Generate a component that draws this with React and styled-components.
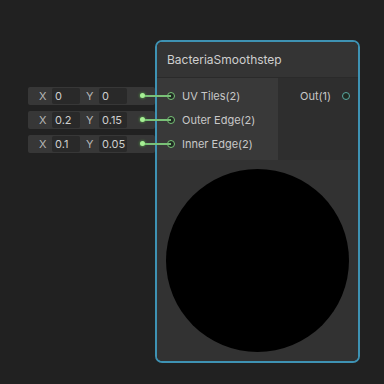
import React from 'react';
import styled, { createGlobalStyle } from 'styled-components';

const GlobalStyle = createGlobalStyle`
    html, body {
        margin: 0;
        padding: 0;
        background: #212121;
    }
    * {
        box-sizing: border-box;
    }
`

const Canvas = styled.div`
    display: flex;
    align-items: flex-start;
    width: 384px;
    height: 384px;
    padding: 40px 0 0 28px;
    font-family: Inter, "Noto Sans", sans-serif;
    font-size: 11px;
    color: #c4c4c4;
    overflow: hidden;
`

const InputColumn = styled.div`
    display: flex;
    flex-direction: column;
    gap: 6px;
    width: 127px;
    margin-top: 47px;
`

const InputRow = styled.div`
    position: relative;
    display: flex;
    align-items: center;
    height: 18px;
    padding-left: 11px;
    background: #373737;
    border-radius: 2px;
`

const AxisLabel = styled.span`
    width: 9px;
    margin-right: 4px;
    color: #b5b5b5;
`

const Field = styled.span`
    display: flex;
    align-items: center;
    width: 28px;
    height: 16px;
    margin-right: 6px;
    padding-left: 3px;
    background: #292929;
    border-radius: 2px;
    color: #cfcfcf;
`

const Dot = styled.span`
    position: absolute;
    right: 10px;
    top: 6px;
    width: 5px;
    height: 5px;
    border-radius: 50%;
    background: #a6ef94;
    box-shadow: 0 0 3px #5fbf50;
`

const Wire = styled.span`
    position: absolute;
    left: calc(100% - 10px);
    top: 8px;
    width: 26px;
    height: 2px;
    background: #79c177;
`

const Node = styled.div`
    display: flex;
    flex-direction: column;
    width: 205px;
    height: 323px;
    border: 2px solid #3e92b3;
    border-radius: 7px;
    background: #333333;
    box-shadow: inset 0 0 0 1px #1c1c1c;
    overflow: hidden;
`

const Header = styled.div`
    display: flex;
    align-items: center;
    height: 36px;
    padding-left: 10px;
    background: #343434;
    color: #cfcfcf;
    font-size: 12px;
    border-bottom: 1px solid #2a2a2a;
`

const Ports = styled.div`
    display: flex;
    height: 82px;
`

const InputPanel = styled.div`
    display: flex;
    flex-direction: column;
    width: 121px;
    padding-top: 6px;
    background: #393939;
`

const OutputPanel = styled.div`
    flex: 1;
    display: flex;
    flex-direction: column;
    align-items: flex-end;
    padding-top: 6px;
    padding-right: 8px;
    background: #2e2e2e;
`

const PortRow = styled.div`
    display: flex;
    align-items: center;
    gap: 7px;
    height: 24px;
    padding-left: ${props => (props.out ? '0' : '10px')};
    color: #c8c8c8;
`

const PortRing = styled.span`
    width: 8px;
    height: 8px;
    border-radius: 50%;
    border: 1.5px solid ${props => props.color};
    background: #1f2a22;
    order: ${props => (props.out ? 1 : 0)};
    margin-left: ${props => (props.out ? '4px' : '0')};
`

const Preview = styled.div`
    flex: 1;
    display: flex;
    align-items: center;
    justify-content: center;
    background: #323232;
`

const Sphere = styled.div`
    width: 183px;
    height: 183px;
    border-radius: 50%;
    background: #000;
`

const inputs = [
    { x: '0', y: '0' },
    { x: '0.2', y: '0.15' },
    { x: '0.1', y: '0.05' },
]

const ports = ['UV Tiles(2)', 'Outer Edge(2)', 'Inner Edge(2)']

const App = () => (
    <Canvas>
        <GlobalStyle />
        <InputColumn>
            {inputs.map((v, i) => (
                <InputRow key={i}>
                    <AxisLabel>X</AxisLabel>
                    <Field>{v.x}</Field>
                    <AxisLabel>Y</AxisLabel>
                    <Field>{v.y}</Field>
                    <Wire />
                    <Dot />
                </InputRow>
            ))}
        </InputColumn>
        <Node>
            <Header>BacteriaSmoothstep</Header>
            <Ports>
                <InputPanel>
                    {ports.map(p => (
                        <PortRow key={p}>
                            <PortRing color="#79c177" />
                            <span>{p}</span>
                        </PortRow>
                    ))}
                </InputPanel>
                <OutputPanel>
                    <PortRow out>
                        <span>Out(1)</span>
                        <PortRing out color="#5aa9a2" />
                    </PortRow>
                </OutputPanel>
            </Ports>
            <Preview>
                <Sphere />
            </Preview>
        </Node>
    </Canvas>
)

export default App;
